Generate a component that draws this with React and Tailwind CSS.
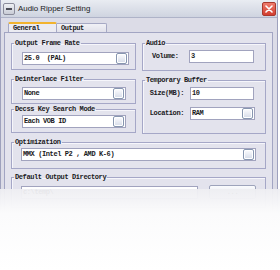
import React from "react";

function DropBtn() {
  return (
    <div className="w-[11px] h-[11px] shrink-0 rounded-[2px] border border-[#8796b0] bg-gradient-to-b from-[#fdfdff] to-[#d5dbe8] shadow-[inset_0_0_0_1px_#ffffff]" />
  );
}

function Select({ value, w }) {
  return (
    <div className={`h-[13px] flex items-center bg-white border border-[#a1a3be] pl-[1px] pr-[1px] ${w || ""}`}>
      <span className="flex-1 leading-[7px] whitespace-pre">{value}</span>
      <DropBtn />
    </div>
  );
}

function Input({ value, w }) {
  return (
    <div className={`h-[13px] flex items-center bg-white border border-[#a1a3be] pl-[1px] ${w || ""}`}>
      <span className="leading-[7px]">{value}</span>
    </div>
  );
}

function Group({ label, className, inner, children }) {
  return (
    <fieldset className={`border border-[#a5a7c7] shadow-[inset_1px_1px_0_#f6f6fb] min-w-0 ${className || ""}`}>
      <legend className="ml-[2px] px-[1px] text-[7px] leading-[7px]">{label}</legend>
      <div className={inner}>{children}</div>
    </fieldset>
  );
}

export default function App() {
  return (
    <div className="relative w-[280px] h-[270px] overflow-hidden bg-white font-['Liberation_Mono','DejaVu_Sans_Mono',monospace] text-[7px] tracking-[-0.4px] font-bold text-[#1a1a22]">
      <div className="w-[278px] h-[270px] flex flex-col border-l border-r border-[#9ea1bd] bg-[#dcdce7]">
        {/* title bar */}
        <div className="h-[18px] shrink-0 flex items-center pl-[2px] pr-[1px] bg-gradient-to-b from-[#e9ecf2] to-[#cfd4e0] border-b border-[#aeb3c8]">
          <div className="w-[12px] h-[12px] rounded-[2px] border border-[#8b8d9c] bg-gradient-to-b from-[#eef0f4] to-[#c9ccd6] flex items-center justify-center">
            <div className="w-[6px] h-[2px] bg-[#4b4d58]" />
          </div>
          <span className="ml-[3px] flex-1 font-['Liberation_Sans',Arial,sans-serif] font-normal tracking-normal text-[7.9px] leading-[10px] text-[#1c1c24]">
            Audio Ripper Setting
          </span>
          <div className="w-[14px] h-[14px] rounded-[2px] border border-[#a8382e] bg-gradient-to-b from-[#ee7a6c] to-[#d23d2f] flex items-center justify-center">
            <svg width="8" height="8" viewBox="0 0 8 8">
              <path d="M1 1 L7 7 M7 1 L1 7" stroke="#ffffff" strokeWidth="1.6" strokeLinecap="round" />
            </svg>
          </div>
        </div>

        {/* tabs */}
        <div className="mt-[4px] pl-[7px] flex items-end h-[10px] shrink-0">
          <div className="w-[49px] h-[10px] rounded-t-[2px] border-t-2 border-[#f2b32e] border-l border-r border-l-[#a6a9c4] border-r-[#a6a9c4] bg-[#ebebf2] pl-[4px] flex items-center leading-[7px]">
            General
          </div>
          <div className="w-[50px] h-[9px] rounded-tr-[2px] border-t border-r border-[#a6a9c4] bg-gradient-to-b from-[#f1f1f6] to-[#e1e1ea] pl-[4px] flex items-center leading-[7px]">
            Output
          </div>
        </div>

        {/* panel */}
        <div className="ml-[3px] mr-[4px] flex-1 border border-[#a2a5c3] bg-[#e3e3ed] pt-[7px] px-[6px]">
          <div className="grid grid-cols-[125px_124px] gap-x-[6px]">
            <div className="flex flex-col">
              <Group label="Output Frame Rate" inner="pt-[5px] pb-[4px] pl-[10px] pr-[6px]">
                <Select value="25.0  (PAL)" />
              </Group>
              <Group label="Deinterlace Filter" className="mt-[6px]" inner="pt-[4px] pb-[3px] pl-[10px] pr-[9px]">
                <Select value="None" />
              </Group>
              <Group label="Decss Key Search Mode" className="mt-[2px]" inner="pt-[2px] pb-[4px] pl-[10px] pr-[9px]">
                <Select value="Each VOB ID" />
              </Group>
            </div>
            <div className="flex flex-col">
              <Group label="Audio" inner="pt-[3px] pb-[7px] pl-[9px] pr-[11px]">
                <div className="flex items-center">
                  <span className="w-[37px]">Volume:</span>
                  <Input value="3" w="flex-1" />
                </div>
              </Group>
              <Group label="Temporary Buffer" className="mt-[6px]" inner="pt-[3px] pb-[13px] pl-[4px] pr-[11px]">
                <div className="flex items-center">
                  <span className="w-[43px] text-right pr-[6px]">Size(MB):</span>
                  <Input value="10" w="flex-1" />
                </div>
                <div className="flex items-center mt-[7px]">
                  <span className="w-[43px] text-right pr-[6px]">Location:</span>
                  <Select value="RAM" w="flex-1 mr-[-1px]" />
                </div>
              </Group>
            </div>
          </div>
          <Group label="Optimization" className="mt-[5px]" inner="pt-[2px] pb-[7px] pl-[9px] pr-[9px]">
            <Select value="MMX (Intel P2 , AMD K-6)" />
          </Group>
          <Group label="Default Output Directory" className="mt-[5px]" inner="pt-[4px] pb-[8px] pl-[9px] pr-[9px]">
            <div className="flex items-center gap-[11px]">
              <Input value="c:\temp\" w="flex-1" />
              <div className="w-[47px] h-[14px] rounded-[2px] border border-[#9da3bb] bg-gradient-to-b from-[#fafbfd] to-[#dfe3ec] flex items-center justify-center leading-[7px]">
                ...
              </div>
            </div>
          </Group>
        </div>
      </div>

      {/* fade overlay */}
      <div className="absolute left-0 right-0 top-[189px] bottom-0 bg-gradient-to-b from-[#eeeef2]/95 via-[#fbfbfc] via-[30%] to-white" />
    </div>
  );
}
